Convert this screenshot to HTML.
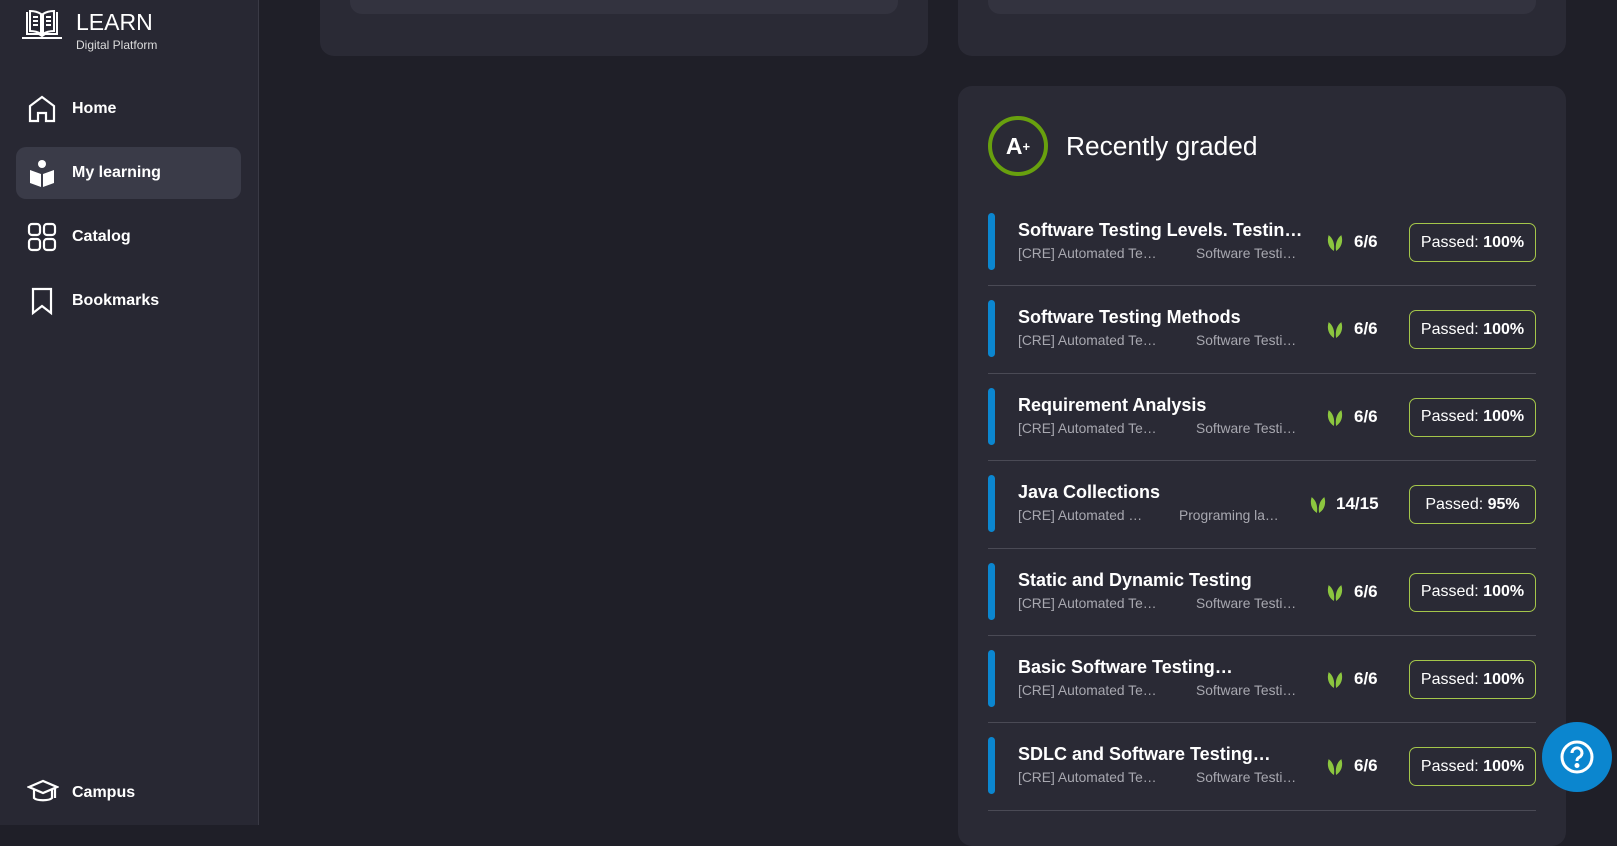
<!DOCTYPE html>
<html><head><meta charset="utf-8"><style>
*{box-sizing:border-box;margin:0;padding:0}
body{width:1617px;height:825px;overflow:hidden;background:#1f1f28;font-family:"Liberation Sans",sans-serif;color:#fff;position:relative}
.side{position:absolute;left:0;top:0;width:259px;height:825px;background:#282833;border-right:1px solid #3a3a45}
.logo{position:absolute;left:22px;top:8px}
.logo .t{position:absolute;left:54px;top:1px;font-size:23px}
.logo .s{position:absolute;left:54px;top:30px;font-size:12px;color:#ddd;white-space:nowrap}
.nav{position:absolute;left:16px;width:225px;height:52px;border-radius:10px;display:flex;align-items:center;font-weight:bold;font-size:16px}
.nav svg{position:absolute;left:11px}
.nav span{position:absolute;left:56px}
.act{background:#3a3b48}
.card{position:absolute;background:#2a2a35;border-radius:14px}
.row{position:absolute;left:988px;width:548px;height:87.4px;border-bottom:1px solid #4a4a55}
.bar{position:absolute;left:0;top:14px;width:7px;height:57px;background:#0b86cf;border-radius:4px}
.tt{position:absolute;left:30px;top:21px;font-size:18px;font-weight:bold;white-space:nowrap}
.sub{position:absolute;left:30px;top:47px;font-size:13.8px;color:#a8a8b0;white-space:nowrap}
.sub i{font-style:normal;position:absolute;left:0}
.sub i+i{left:178px}
.sc{position:absolute;top:33px;font-size:17px;font-weight:bold}
.bd{position:absolute;left:421px;top:24px;width:127px;height:39px;border:1.5px solid #a4c64a;border-radius:7px;font-size:16px;display:flex;align-items:center;justify-content:center}
</style></head><body>
<div class="side">
 <div class="logo">
  <svg width="40" height="32" viewBox="0 0 40 32" fill="none" stroke="#fff" stroke-width="2"><path d="M5 4v22h12l3 2 3-2h12V4"/><path d="M8 3c4 0 8 1 11 3v20c-3-2-7-3-11-3zM32 3c-4 0-8 1-11 3v20c3-2 7-3 11-3z"/><path d="M11 9h5M11 13h5M11 17h5M24 9h5M24 13h5M24 17h5"/><path d="M0 30h40"/></svg>
  <div class="t">LEARN</div><div class="s">Digital Platform</div>
 </div>
 <div class="nav" style="top:83px"><svg width="30" height="30" viewBox="0 0 30 30" fill="none" stroke="#fff" stroke-width="2.2"><path d="M3 27V12L15 3l12 9v15h-8v-8h-8v8z"/></svg><span>Home</span></div>
 <div class="nav act" style="top:147px"><svg width="30" height="30" viewBox="0 0 30 30" fill="#fff"><circle cx="15" cy="6" r="4"/><path d="M3 12l11 4v13L3 25zM27 12l-11 4v13l11-4z"/></svg><span>My learning</span></div>
 <div class="nav" style="top:211px"><svg width="30" height="30" viewBox="0 0 30 30" fill="none" stroke="#fff" stroke-width="2.2"><rect x="2" y="2" width="11" height="11" rx="3"/><rect x="17" y="2" width="11" height="11" rx="3"/><rect x="2" y="17" width="11" height="11" rx="3"/><rect x="17" y="17" width="11" height="11" rx="3"/></svg><span>Catalog</span></div>
 <div class="nav" style="top:275px"><svg width="30" height="30" viewBox="0 0 30 30" fill="none" stroke="#fff" stroke-width="2.2"><path d="M6 3h18v24l-9-7-9 7z"/></svg><span>Bookmarks</span></div>
 <div class="nav" style="top:767px;height:52px"><svg width="32" height="30" viewBox="0 0 32 30" fill="none" stroke="#fff" stroke-width="2.2"><path d="M2 9l14-6 14 6-14 6z"/><path d="M7 12v8c3 3 15 3 18 0v-8M28 10v10"/></svg><span>Campus</span></div>
</div>
<div class="card" style="left:320px;top:-20px;width:608px;height:76px"><div style="position:absolute;left:30px;top:0;width:548px;height:34px;background:#33333f;border-radius:0 0 12px 12px"></div></div>
<div class="card" style="left:958px;top:-20px;width:608px;height:76px"><div style="position:absolute;left:30px;top:0;width:548px;height:34px;background:#33333f;border-radius:0 0 12px 12px"></div></div>
<div class="card" style="left:958px;top:86px;width:608px;height:760px"></div>
<div style="position:absolute;left:988px;top:116px;width:60px;height:60px;border:4px solid #68a00e;border-radius:50%;font-size:23px;font-weight:bold;display:flex;align-items:center;justify-content:center">A<span style="font-size:13px">+</span></div>
<div style="position:absolute;left:1066px;top:131px;font-size:26.3px">Recently graded</div>

<div class="row" style="top:199px"><div class="bar"></div><div class="tt">Software Testing Levels. Testin…</div><div class="sub"><i>[CRE] Automated Te…</i><i>Software Testi…</i></div><svg class="sc" style="left:338px;top:34px" width="18" height="19" viewBox="0 0 16 18" fill="#8cc63f"><path d="M7 17C2 14 0 8 2 2c4 3 6 8 5 15zM9 17c5-3 7-9 5-15-4 3-6 8-5 15z"/></svg><div class="sc" style="left:366px">6/6</div><div class="bd">Passed:&nbsp;<b>100%</b></div></div>
<div class="row" style="top:286.4px"><div class="bar"></div><div class="tt">Software Testing Methods</div><div class="sub"><i>[CRE] Automated Te…</i><i>Software Testi…</i></div><svg class="sc" style="left:338px;top:34px" width="18" height="19" viewBox="0 0 16 18" fill="#8cc63f"><path d="M7 17C2 14 0 8 2 2c4 3 6 8 5 15zM9 17c5-3 7-9 5-15-4 3-6 8-5 15z"/></svg><div class="sc" style="left:366px">6/6</div><div class="bd">Passed:&nbsp;<b>100%</b></div></div>
<div class="row" style="top:373.8px"><div class="bar"></div><div class="tt">Requirement Analysis</div><div class="sub"><i>[CRE] Automated Te…</i><i>Software Testi…</i></div><svg class="sc" style="left:338px;top:34px" width="18" height="19" viewBox="0 0 16 18" fill="#8cc63f"><path d="M7 17C2 14 0 8 2 2c4 3 6 8 5 15zM9 17c5-3 7-9 5-15-4 3-6 8-5 15z"/></svg><div class="sc" style="left:366px">6/6</div><div class="bd">Passed:&nbsp;<b>100%</b></div></div>
<div class="row" style="top:461.2px"><div class="bar"></div><div class="tt">Java Collections</div><div class="sub"><i>[CRE] Automated …</i><i style="left:161px">Programing la…</i></div><svg class="sc" style="left:321px;top:34px" width="18" height="19" viewBox="0 0 16 18" fill="#8cc63f"><path d="M7 17C2 14 0 8 2 2c4 3 6 8 5 15zM9 17c5-3 7-9 5-15-4 3-6 8-5 15z"/></svg><div class="sc" style="left:348px">14/15</div><div class="bd">Passed:&nbsp;<b>95%</b></div></div>
<div class="row" style="top:548.6px"><div class="bar"></div><div class="tt">Static and Dynamic Testing</div><div class="sub"><i>[CRE] Automated Te…</i><i>Software Testi…</i></div><svg class="sc" style="left:338px;top:34px" width="18" height="19" viewBox="0 0 16 18" fill="#8cc63f"><path d="M7 17C2 14 0 8 2 2c4 3 6 8 5 15zM9 17c5-3 7-9 5-15-4 3-6 8-5 15z"/></svg><div class="sc" style="left:366px">6/6</div><div class="bd">Passed:&nbsp;<b>100%</b></div></div>
<div class="row" style="top:636px"><div class="bar"></div><div class="tt">Basic Software Testing…</div><div class="sub"><i>[CRE] Automated Te…</i><i>Software Testi…</i></div><svg class="sc" style="left:338px;top:34px" width="18" height="19" viewBox="0 0 16 18" fill="#8cc63f"><path d="M7 17C2 14 0 8 2 2c4 3 6 8 5 15zM9 17c5-3 7-9 5-15-4 3-6 8-5 15z"/></svg><div class="sc" style="left:366px">6/6</div><div class="bd">Passed:&nbsp;<b>100%</b></div></div>
<div class="row" style="top:723.4px"><div class="bar"></div><div class="tt">SDLC and Software Testing…</div><div class="sub"><i>[CRE] Automated Te…</i><i>Software Testi…</i></div><svg class="sc" style="left:338px;top:34px" width="18" height="19" viewBox="0 0 16 18" fill="#8cc63f"><path d="M7 17C2 14 0 8 2 2c4 3 6 8 5 15zM9 17c5-3 7-9 5-15-4 3-6 8-5 15z"/></svg><div class="sc" style="left:366px">6/6</div><div class="bd">Passed:&nbsp;<b>100%</b></div></div>

<div style="position:absolute;left:1542px;top:722px;width:70px;height:70px;border-radius:50%;background:#0b86cf;display:flex;align-items:center;justify-content:center"><svg width="36" height="36" viewBox="0 0 36 36" fill="none" stroke="#fff" stroke-width="3"><circle cx="18" cy="18" r="15"/><path d="M13 14a5 5 0 1 1 7 4.5c-1.5.8-2 1.5-2 3.5"/><circle cx="18" cy="26.5" r="1" fill="#fff"/></svg></div>
</body></html>
